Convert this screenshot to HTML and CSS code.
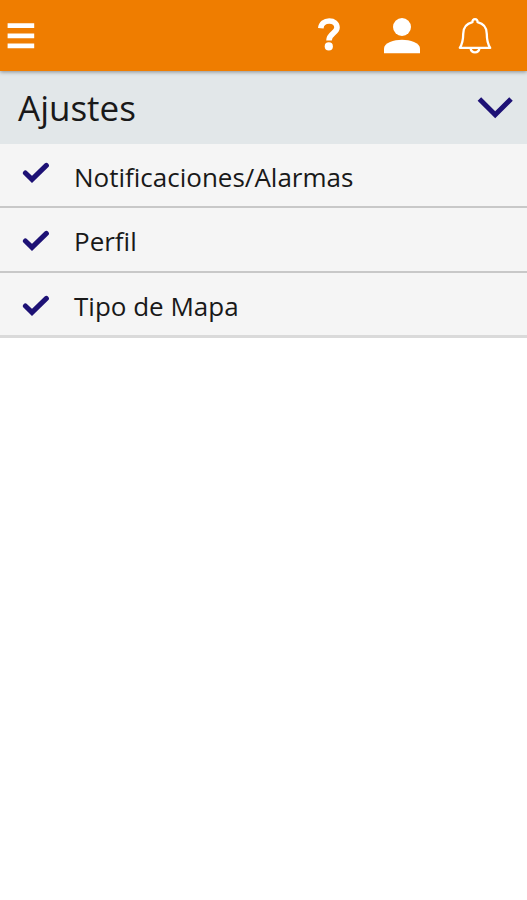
FILE: index.html
```html
<!DOCTYPE html>
<html lang="es">
<head>
<meta charset="utf-8">
<meta name="viewport" content="width=device-width, initial-scale=1">
<title>Ajustes</title>
<link rel="stylesheet" href="styles.css">
</head>
<body>
<header class="topbar">
  <button class="topbar-button menu-button" type="button" aria-label="Menú">
    <svg class="icon" viewBox="0 0 36 36" aria-hidden="true"><path fill="#fff" d="M4.600 5.200h26.600v4.800H4.600zM4.600 15.400h26.600v4.800H4.600zM4.600 25.500h26.600v4.800H4.600z"/></svg>
  </button>
  <button class="topbar-button" type="button" aria-label="Ayuda">
    <svg class="icon" viewBox="0 0 36 36" aria-hidden="true"><path fill="none" stroke="#fff" stroke-width="5.600" d="M9.800 10.200C10.200 5.600 13.600 3 18.200 3C23 3 26 5.600 26 9.600C26 15.200 18 15.400 18 22.600"/><circle cx="17.800" cy="28.400" r="4.100" fill="#fff"/></svg>
  </button>
  <button class="topbar-button" type="button" aria-label="Usuario">
    <svg class="icon" viewBox="0 0 36 36" aria-hidden="true"><circle cx="18" cy="9" r="9" fill="#fff"/><path fill="#fff" d="M0 35.200V30.500C0 25 10 21.800 18 21.800S36 25 36 30.500V35.200Z"/></svg>
  </button>
  <button class="topbar-button" type="button" aria-label="Notificaciones">
    <svg class="icon" viewBox="0 0 36 36" aria-hidden="true"><g fill="none" stroke="#fff" stroke-width="2.300" stroke-linejoin="round"><path d="M15.500 4.200C15.300 2.200 16.300 1.200 18 1.200S20.700 2.200 20.500 4.200C26.500 5.600 29.800 10 29.800 16C29.800 22.500 31 26.500 33.200 29.800H2.800C5 26.500 6.200 22.500 6.200 16C6.200 10 9.500 5.600 15.500 4.200Z"/><path d="M13.600 30.500C14 33 15.800 34.300 18 34.300S22 33 22.400 30.500"/></g></svg>
  </button>
</header>
<main>
  <h1 class="section">
    <button class="section-toggle" type="button" aria-expanded="true" aria-controls="opciones">
      <span>Ajustes</span>
      <svg class="icon" viewBox="0 0 36 36" aria-hidden="true"><path fill="none" stroke="#1d1175" stroke-width="5" d="M2.400 9L18.200 24.800L34 9"/></svg>
    </button>
  </h1>
  <ul class="options" id="opciones">
    <li><a class="option" href="#notificaciones"><svg class="check check-raised" viewBox="0 0 28 28" aria-hidden="true"><path d="M3.400 14L10 20.400L24.400 6.400"/></svg>Notificaciones/Alarmas</a></li>
    <li><a class="option" href="#perfil"><svg class="check" viewBox="0 0 28 28" aria-hidden="true"><path d="M3.400 14L10 20.400L24.400 6.400"/></svg>Perfil</a></li>
    <li><a class="option" href="#mapa"><svg class="check" viewBox="0 0 28 28" aria-hidden="true"><path d="M3.400 14L10 20.400L24.400 6.400"/></svg>Tipo de Mapa</a></li>
  </ul>
</main>
</body>
</html>
```
FILE: styles.css
```css
* {
  box-sizing: border-box;
}

body {
  margin: 0;
  background: #fff;
  color: #191919;
  font-family: "Open Sans", "Noto Sans", sans-serif;
}

button {
  margin: 0;
  padding: 0;
  border: 0;
  background: none;
  color: inherit;
  font: inherit;
  cursor: pointer;
}

.icon {
  display: block;
  flex: none;
  width: 36px;
  height: 36px;
}

.topbar {
  position: relative;
  display: flex;
  align-items: center;
  height: 71px;
  padding-right: 16px;
  background: #ef7d00;
  box-shadow: 0 1px 4px rgba(0, 0, 0, 0.4);
}

.topbar-button {
  display: flex;
  align-items: center;
  justify-content: center;
  width: 73px;
  height: 71px;
}

.menu-button {
  width: 42px;
  margin-right: auto;
}

.section {
  margin: 0;
  font-size: 35px;
  font-weight: 400;
  line-height: 48px;
}

.section-toggle {
  display: flex;
  align-items: center;
  justify-content: space-between;
  width: 100%;
  height: 73px;
  padding: 0 14px 0 18px;
  background: #e2e7e9;
}

.options {
  margin: 0;
  padding: 0;
  list-style: none;
}

.options li {
  height: 65px;
  border-bottom: 2px solid #c8c8c8;
  background: #f5f5f5;
}

.options li:first-child {
  height: 64px;
}

.options li:last-child {
  border-bottom: 3px solid #dadada;
}

.option {
  display: flex;
  align-items: center;
  gap: 24px;
  height: 62px;
  padding: 4px 22px 0;
  color: inherit;
  font-size: 26px;
  font-weight: 400;
  line-height: 36px;
  text-decoration: none;
}

.check {
  flex: none;
  width: 28px;
  height: 28px;
  fill: none;
  stroke: #1d1175;
  stroke-width: 5;
  stroke-linecap: round;
}

.check-raised {
  margin-bottom: 8px;
}
```
